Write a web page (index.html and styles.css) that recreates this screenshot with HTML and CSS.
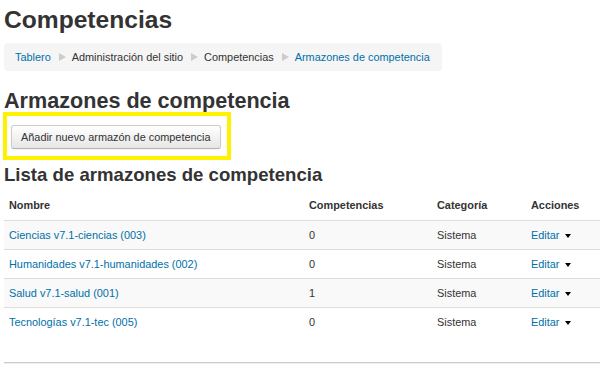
FILE: index.html
```html
<!DOCTYPE html>
<html>
<head>
    <title>Armazones de competencia</title>
    <meta charset="UTF-8">
    <link rel="stylesheet" href="styles.css">
</head>
<body>
    <div class="page">
        <h1>Competencias</h1>

        <ul class="breadcrumb">
            <li><a href="#">Tablero</a></li>
            <li class="sep"></li>
            <li>Administración del sitio</li>
            <li class="sep"></li>
            <li>Competencias</li>
            <li class="sep"></li>
            <li><a href="#">Armazones de competencia</a></li>
        </ul>

        <h2>Armazones de competencia</h2>

        <div class="highlight">
            <button class="btn">Añadir nuevo armazón de competencia</button>
        </div>

        <h3>Lista de armazones de competencia</h3>

        <table class="frameworks">
            <thead>
                <tr>
                    <th class="col-name">Nombre</th>
                    <th class="col-count">Competencias</th>
                    <th class="col-cat">Categoría</th>
                    <th class="col-actions">Acciones</th>
                </tr>
            </thead>
            <tbody>
                <tr>
                    <td><a href="#">Ciencias v7.1-ciencias (003)</a></td>
                    <td>0</td>
                    <td>Sistema</td>
                    <td><a href="#">Editar</a> <span class="caret"></span></td>
                </tr>
                <tr>
                    <td><a href="#">Humanidades v7.1-humanidades (002)</a></td>
                    <td>0</td>
                    <td>Sistema</td>
                    <td><a href="#">Editar</a> <span class="caret"></span></td>
                </tr>
                <tr>
                    <td><a href="#">Salud v7.1-salud (001)</a></td>
                    <td>1</td>
                    <td>Sistema</td>
                    <td><a href="#">Editar</a> <span class="caret"></span></td>
                </tr>
                <tr>
                    <td><a href="#">Tecnologías v7.1-tec (005)</a></td>
                    <td>0</td>
                    <td>Sistema</td>
                    <td><a href="#">Editar</a> <span class="caret"></span></td>
                </tr>
            </tbody>
        </table>

        <div class="footer-line"></div>
    </div>
</body>
</html>
```

FILE: styles.css
```css
body {
    margin: 0;
    font-family: "Liberation Sans", Arial, sans-serif;
    font-size: 10.9px;
    color: #333;
    background: #fff;
}
a {
    color: #0070a8;
    text-decoration: none;
}
.page {
    padding: 5px 0 0 4px;
}
h1 {
    margin: 0;
    font-size: 24.6px;
    line-height: 30px;
    font-weight: bold;
    color: #333;
}
h2 {
    margin: 19px 0 0;
    font-size: 21.6px;
    line-height: 22px;
    font-weight: bold;
}
h3 {
    margin: 4px 0 0;
    font-size: 18.6px;
    line-height: 22px;
    font-weight: bold;
}
.breadcrumb {
    display: flex;
    align-items: center;
    width: fit-content;
    height: 28px;
    margin: 8px 0 0;
    padding: 0 12px 0 11px;
    list-style: none;
    background-color: #f5f5f5;
    border-radius: 4px;
    box-sizing: border-box;
}
.breadcrumb .sep {
    width: 0;
    height: 0;
    margin: 0 6px 0 8px;
    border-left: 7px solid #ccc;
    border-top: 4px solid transparent;
    border-bottom: 4px solid transparent;
}
.highlight {
    display: inline-block;
    margin-left: -1px;
    padding: 9px 6px 7px 4px;
    border: 4px solid #fff200;
}
.btn {
    display: block;
    padding: 4px 9px;
    font-family: inherit;
    font-size: 10.9px;
    line-height: 14px;
    color: #333;
    background: linear-gradient(#fff, #e6e6e6);
    border: 1px solid #ccc;
    border-bottom-color: #b3b3b3;
    border-radius: 3px;
    box-shadow: inset 0 1px 0 rgba(255,255,255,.2), 0 1px 2px rgba(0,0,0,.05);
}
.frameworks {
    width: 596px;
    margin-top: 5px;
    border-collapse: collapse;
    table-layout: fixed;
}
.frameworks th,
.frameworks td {
    padding: 6px 5px;
    line-height: 16px;
    text-align: left;
    vertical-align: top;
}
.frameworks th {
    padding-bottom: 7px;
    font-weight: bold;
}
.frameworks td {
    border-top: 1px solid #ddd;
}
.frameworks tbody tr:nth-child(odd) td {
    background-color: #f9f9f9;
}
.col-name { width: 290px; }
.col-count { width: 118px; }
.col-cat { width: 84px; }
.col-actions { width: 84px; }
.caret {
    display: inline-block;
    width: 0;
    height: 0;
    margin-left: 3px;
    vertical-align: middle;
    border-top: 4px solid #000;
    border-left: 3px solid transparent;
    border-right: 3px solid transparent;
}
.footer-line {
    margin-top: 26px;
    border-top: 1px solid #ccc;
    border-bottom: 1px solid #eee;
}
```
